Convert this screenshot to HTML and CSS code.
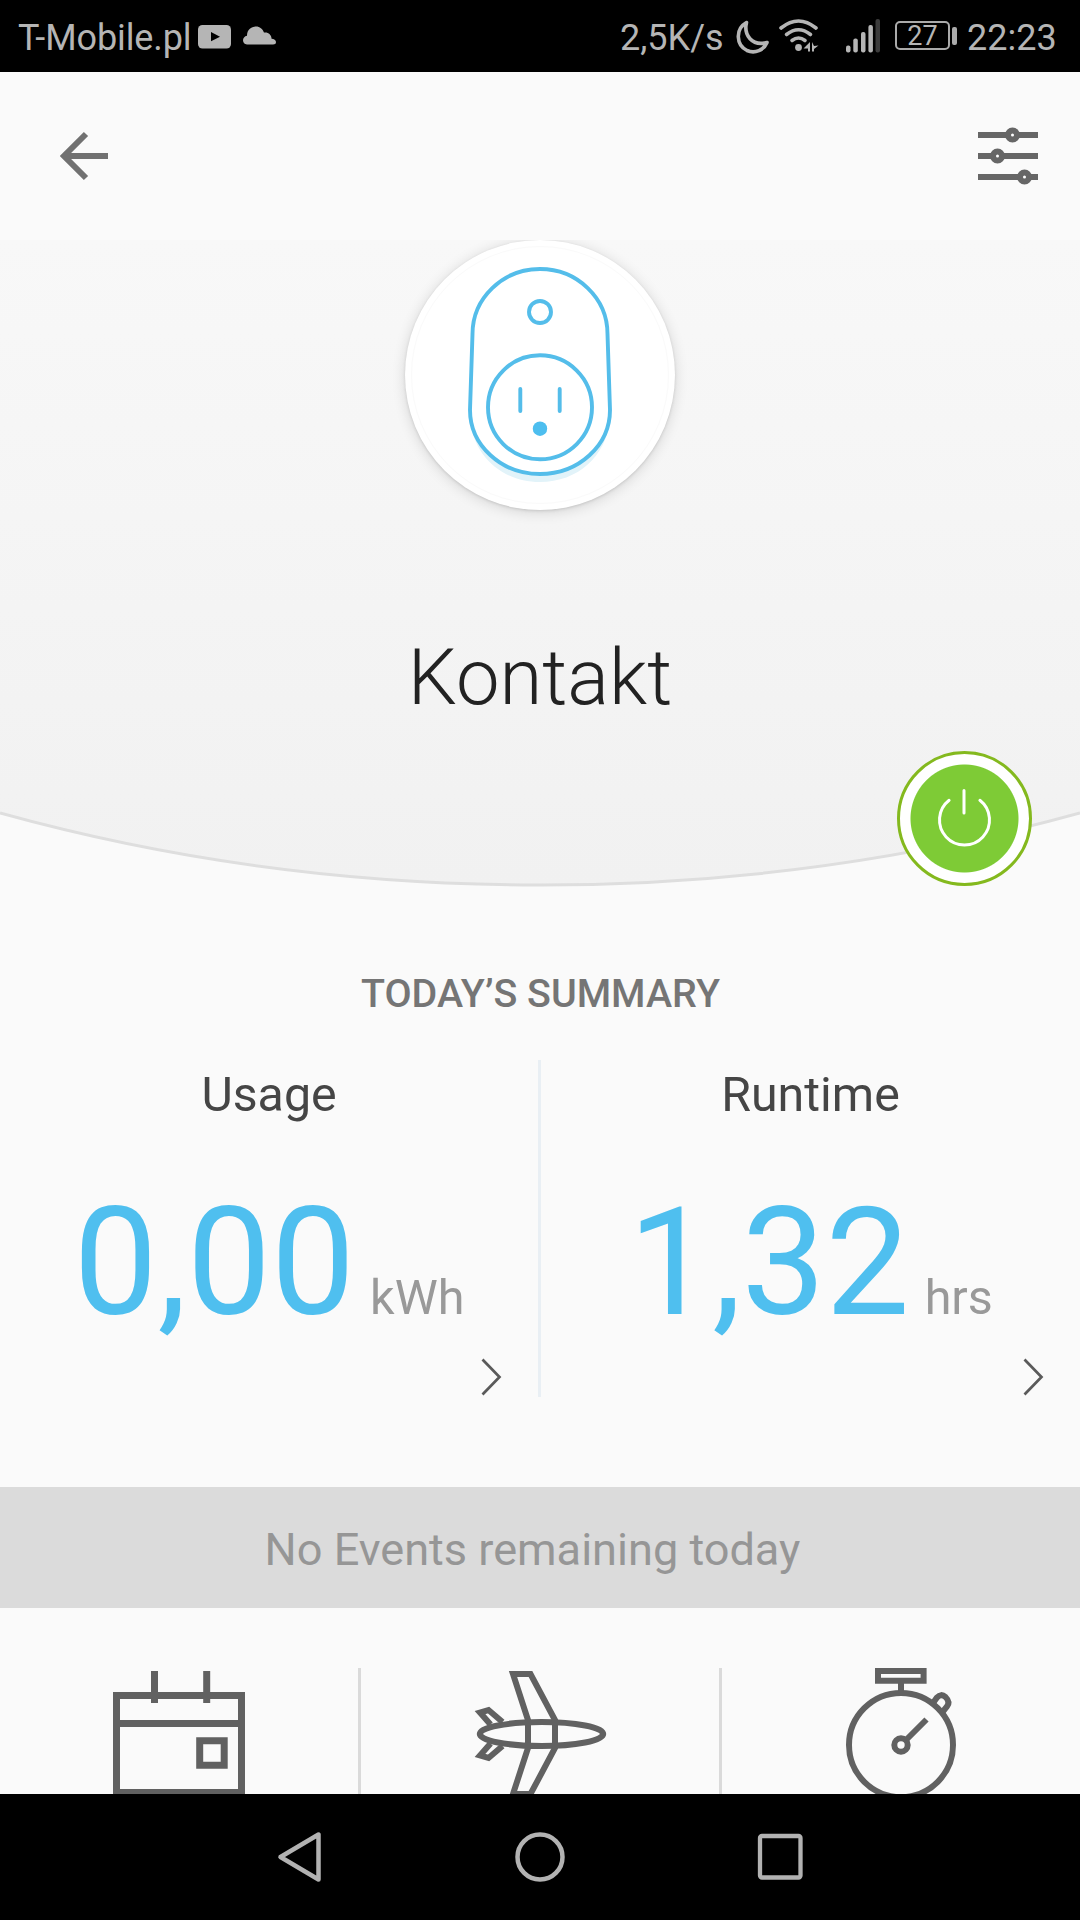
FILE: index.html
```html
<!DOCTYPE html>
<html lang="en">
<head>
<meta charset="utf-8">
<title>Kontakt</title>
<link rel="stylesheet" href="styles.css">
</head>
<body>
<div class="screen">
  <header class="status">
    <span class="carrier">T-Mobile.pl</span>
    <svg class="ic-video" width="33" height="24" viewBox="0 0 33 24"><rect width="33" height="23.500" rx="4.500" fill="#b5b5b5"/><path d="M13 7l9 4.700-9 4.600z" fill="#000"/></svg>
    <svg class="ic-cloud" width="33" height="19" viewBox="0 0 33 19"><path fill="#b5b5b5" d="M4 18.500C1.500 18.500 0 16.500 0 14.300 0 12 1.500 10.200 4 9.700 4 4 8 .5 13 .5c3.800 0 6.600 2.400 8 6 4-.7 7.500 2 7.600 6.300 2.400.3 4.400 1.300 4.400 3.200 0 1.800-1.200 2.500-3 2.500z"/></svg>
    <span class="fill"></span>
    <span class="rate">2,5K/s</span>
    <svg class="ic-moon" width="34" height="34" viewBox="0 0 34 34"><path d="M10.500 2.500C-1 9 0 25 11 30.500 19 34 28 30 31 22.500 16 26.500 7.500 15 10.500 2.500z" fill="none" stroke="#b5b5b5" stroke-width="3.600" stroke-linejoin="round"/></svg>
    <svg class="ic-wifi" width="40" height="34" viewBox="0 0 40 34"><g fill="none" stroke="#b5b5b5" stroke-width="3.600" stroke-linecap="round"><path d="M2 9q17.500-14 35 0"/><path d="M7.500 15.500q12-9.500 24 0"/><path d="M13 21.500q6.500-5 13 0"/></g><circle cx="19.500" cy="28.500" r="3.400" fill="#b5b5b5"/><path fill="#b5b5b5" d="M31 23v9.500h-2v-3h-4.500zM33 23v9.500h2v-2.500l4.500-3.500-4.500.500z"/></svg>
    <svg class="ic-signal" width="35" height="34" viewBox="0 0 35 34"><g fill="#b5b5b5"><rect x="0" y="26.500" width="4.500" height="7" rx="2"/><rect x="7.300" y="19.500" width="4.500" height="14" rx="2"/><rect x="15" y="13" width="4.500" height="20.500" rx="2"/><rect x="22.400" y="6" width="4.500" height="27.500" rx="2"/></g><rect x="29.500" y="0" width="4.500" height="33.500" rx="2" fill="#3b3b3b"/></svg>
    <span class="battery">27</span><span class="battery-tip"></span>
    <span class="clock">22:23</span>
  </header>

  <div class="appbar">
    <svg width="50" height="50" viewBox="0 0 50 50"><path d="M27 3L5 25l22 22M5 25h44" fill="none" stroke="#717171" stroke-width="6"/></svg>
    <svg width="60" height="60" viewBox="0 0 60 60"><path d="M0 9h60M0 30h60M0 51h60" stroke="#666" stroke-width="6"/><g fill="#fff" stroke="#666" stroke-width="6"><circle cx="34.500" cy="9" r="4.500"/><circle cx="19.500" cy="30" r="4.500"/><circle cx="46.500" cy="51" r="4.500"/></g></svg>
  </div>

  <section class="hero">
    <svg class="hero-bg" width="1080" height="660" viewBox="0 0 1080 660">
      <defs><linearGradient id="shade" x1="0" y1="0" x2="0" y2="1"><stop offset="0" stop-color="#f8f8f8"/><stop offset="1" stop-color="#f1f1f1"/></linearGradient></defs>
      <path d="M0 0H1080V573Q820 645 540 645T0 573z" fill="url(#shade)"/>
      <path d="M0 573Q260 645 540 645T1080 573" fill="none" stroke="#dedede" stroke-width="3"/>
    </svg>
    <div class="avatar">
      <svg width="270" height="270" viewBox="405 240 270 270" fill="none" stroke="#54bdea" stroke-width="3.900">
        <circle cx="540" cy="375" r="128.500" stroke="#fafafa" stroke-width="1"/>
        <path d="M470 420C474 456 502 482 540 482S606 456 610 420C606 450 578 474 540 474S474 450 470 420z" fill="#e2f3f9" stroke="none"/>
        <path d="M472.500 334A67.500 65 0 0 1 607.500 334L610 410A70 64 0 0 1 470 410z" fill="#fff"/>
        <circle cx="540" cy="312" r="11"/>
        <circle cx="540" cy="407.300" r="52"/>
        <path d="M520.300 389v22M559.700 389v22" stroke-linecap="round"/>
        <circle cx="540" cy="428.700" r="7.200" fill="#4dbeef" stroke="none"/>
      </svg>
    </div>
    <h1 class="name">Kontakt</h1>
    <button class="power" aria-label="Power">
      <svg width="60" height="60" viewBox="0 0 60 60" fill="none" stroke="#fff" stroke-width="3" stroke-linecap="round"><path d="M14.100 11.300a25 25 0 1 0 30.800 0M29 1.500v22.500"/></svg>
    </button>
  </section>

  <section class="summary">
    <h2>TODAY’S SUMMARY</h2>
    <div class="stats">
      <div class="stat">
        <div class="label">Usage</div>
        <div class="value">0,00<span class="unit"> kWh</span></div>
        <svg class="more" width="21" height="38" viewBox="0 0 21 38"><path d="M1.500 1.500L18.500 19 1.500 36.500" fill="none" stroke="#5a5a5a" stroke-width="2.700"/></svg>
      </div>
      <div class="stat">
        <div class="label">Runtime</div>
        <div class="value">1,32<span class="unit"> hrs</span></div>
        <svg class="more" width="21" height="38" viewBox="0 0 21 38"><path d="M1.500 1.500L18.500 19 1.500 36.500" fill="none" stroke="#5a5a5a" stroke-width="2.700"/></svg>
      </div>
    </div>
  </section>

  <div class="events">No Events remaining today</div>

  <div class="actions">
    <div class="action">
      <svg width="358" height="126" viewBox="0 1668 358 126" fill="none" stroke="#616161" stroke-width="7"><path d="M116.500 1695.500h125v97h-125zM120 1723.500h118M154.500 1671v32M206.700 1671v32M199.700 1740.700h24.500v24.500h-24.500z"/></svg>
    </div>
    <div class="action">
      <svg width="358" height="126" viewBox="361 1668 358 126" fill="none" stroke="#616161" stroke-width="6"><ellipse cx="541.500" cy="1734" rx="61.700" ry="12"/><path d="M528 1748v-28L513 1674h17.500L555 1720v28L530.500 1794H513zM528 1719v30M555 1719v30"/><path d="M490.500 1724.500L480 1712.500l8.500-2.500 14 12M490.500 1743.500L480 1755.500l8.500 2.500 14-12"/></svg>
    </div>
    <div class="action">
      <svg width="358" height="126" viewBox="722 1668 358 126" fill="none" stroke="#616161" stroke-width="6"><path d="M878 1671h45.600v9.700H878zM901 1682v10"/><circle cx="901" cy="1745" r="52"/><circle cx="901" cy="1745" r="6.700"/><path d="M906 1740l20.500-20.500M933 1703l4-5.500Q941 1693 945.500 1697 950.500 1702 947 1706.500l-4.500 5.500"/></svg>
    </div>
  </div>

  <nav class="navbar">
    <svg width="46" height="52" viewBox="0 0 46 52"><path d="M3.500 26L41.500 3.500v45z" fill="none" stroke="#b2b2b2" stroke-width="4.500" stroke-linejoin="round"/></svg>
    <svg width="52" height="52" viewBox="0 0 52 52"><circle cx="26" cy="26" r="22.500" fill="none" stroke="#b2b2b2" stroke-width="4.500"/></svg>
    <svg width="46" height="52" viewBox="0 0 46 52"><rect x="3" y="5" width="40.500" height="41.500" rx="2" fill="none" stroke="#b2b2b2" stroke-width="4.300"/></svg>
  </nav>
</div>
</body>
</html>
```
FILE: styles.css
```css
* { box-sizing: border-box; }
body { margin: 0; background: #fafafa; font-family: Roboto, "Liberation Sans", sans-serif; }
svg { display: block; flex: none; }
h1, h2 { margin: 0; }
.screen { width: 1080px; height: 1920px; display: flex; flex-direction: column; overflow: hidden; }

.status { height: 72px; flex: none; background: #000; color: #b5b5b5; display: flex; align-items: flex-start; font-size: 36px; line-height: 42px; padding: 17px 24px 0 18px; white-space: nowrap; }
.carrier { width: 180px; letter-spacing: -0.1px; }
.ic-video { margin-top: 8px; }
.ic-cloud { margin: 9px 0 0 12px; }
.fill { flex: 1; }
.rate { width: 116px; }
.ic-moon { margin-top: 3px; }
.ic-wifi { margin: 2px 0 0 9px; }
.ic-signal { margin: 2px 0 0 27px; }
.battery { width: 55px; height: 29px; margin: 4px 0 0 14px; border: 2px solid #aaa; border-radius: 5px; font-size: 27px; line-height: 26px; text-align: center; }
.battery-tip { width: 5px; height: 18px; margin: 10px 0 0 2px; border-radius: 2px; background: #aaa; }
.clock { width: 89px; margin-left: 10px; }

.appbar { height: 168px; flex: none; display: flex; justify-content: space-between; align-items: center; padding: 0 42px 0 59px; }

.hero { position: relative; height: 660px; flex: none; display: flex; flex-direction: column; align-items: center; }
.hero-bg { position: absolute; left: 0; top: 0; }
.avatar { position: relative; width: 270px; height: 270px; border-radius: 50%; background: #fff; box-shadow: 0 2px 14px rgba(0,0,0,.14), 0 1px 3px rgba(0,0,0,.12); clip-path: inset(0 -20px -20px -20px); }
.name { position: relative; margin-top: 122px; font-weight: 300; font-size: 77.800px; line-height: 92px; color: #222; }
.power { position: absolute; left: 897px; top: 511px; width: 135px; height: 135px; padding: 0; border: 3px solid #84b91e; border-radius: 50%; background: radial-gradient(circle, #7ecb36 53.5px, #fff 54.5px); display: flex; justify-content: center; align-items: center; }

.summary { height: 587px; flex: none; padding-top: 71px; }
h2 { font-weight: 500; font-size: 39.400px; line-height: 46px; color: #757575; text-align: center; padding-left: 1px; }
.stats { display: flex; margin-top: 43px; height: 337px; }
.stat { width: 539px; display: flex; flex-direction: column; align-items: center; }
.stat:first-child { width: 541px; border-right: 3px solid #e9eff4; }
.label { margin-top: 7px; font-size: 48.300px; line-height: 56px; color: #454545; }
.value { margin-top: 52px; font-size: 149.500px; line-height: 176px; color: #4fbfef; white-space: pre; }
.unit { padding-left: 3px; font-size: 48.500px; line-height: 1; color: #999; }
.more { align-self: flex-end; margin: 7px 36px 0 0; }

.events { height: 121px; flex: none; background: #dbdbdb; color: #969696; font-size: 45.100px; line-height: 126px; text-align: center; padding-right: 15px; }

.actions { height: 186px; flex: none; padding-top: 60px; display: flex; }
.action { display: flex; }
.action:not(:last-child) { border-right: 3px solid #dadada; }

.navbar { height: 126px; flex: none; background: #000; display: flex; justify-content: space-between; align-items: center; padding: 0 277px 0 277px; }
```
